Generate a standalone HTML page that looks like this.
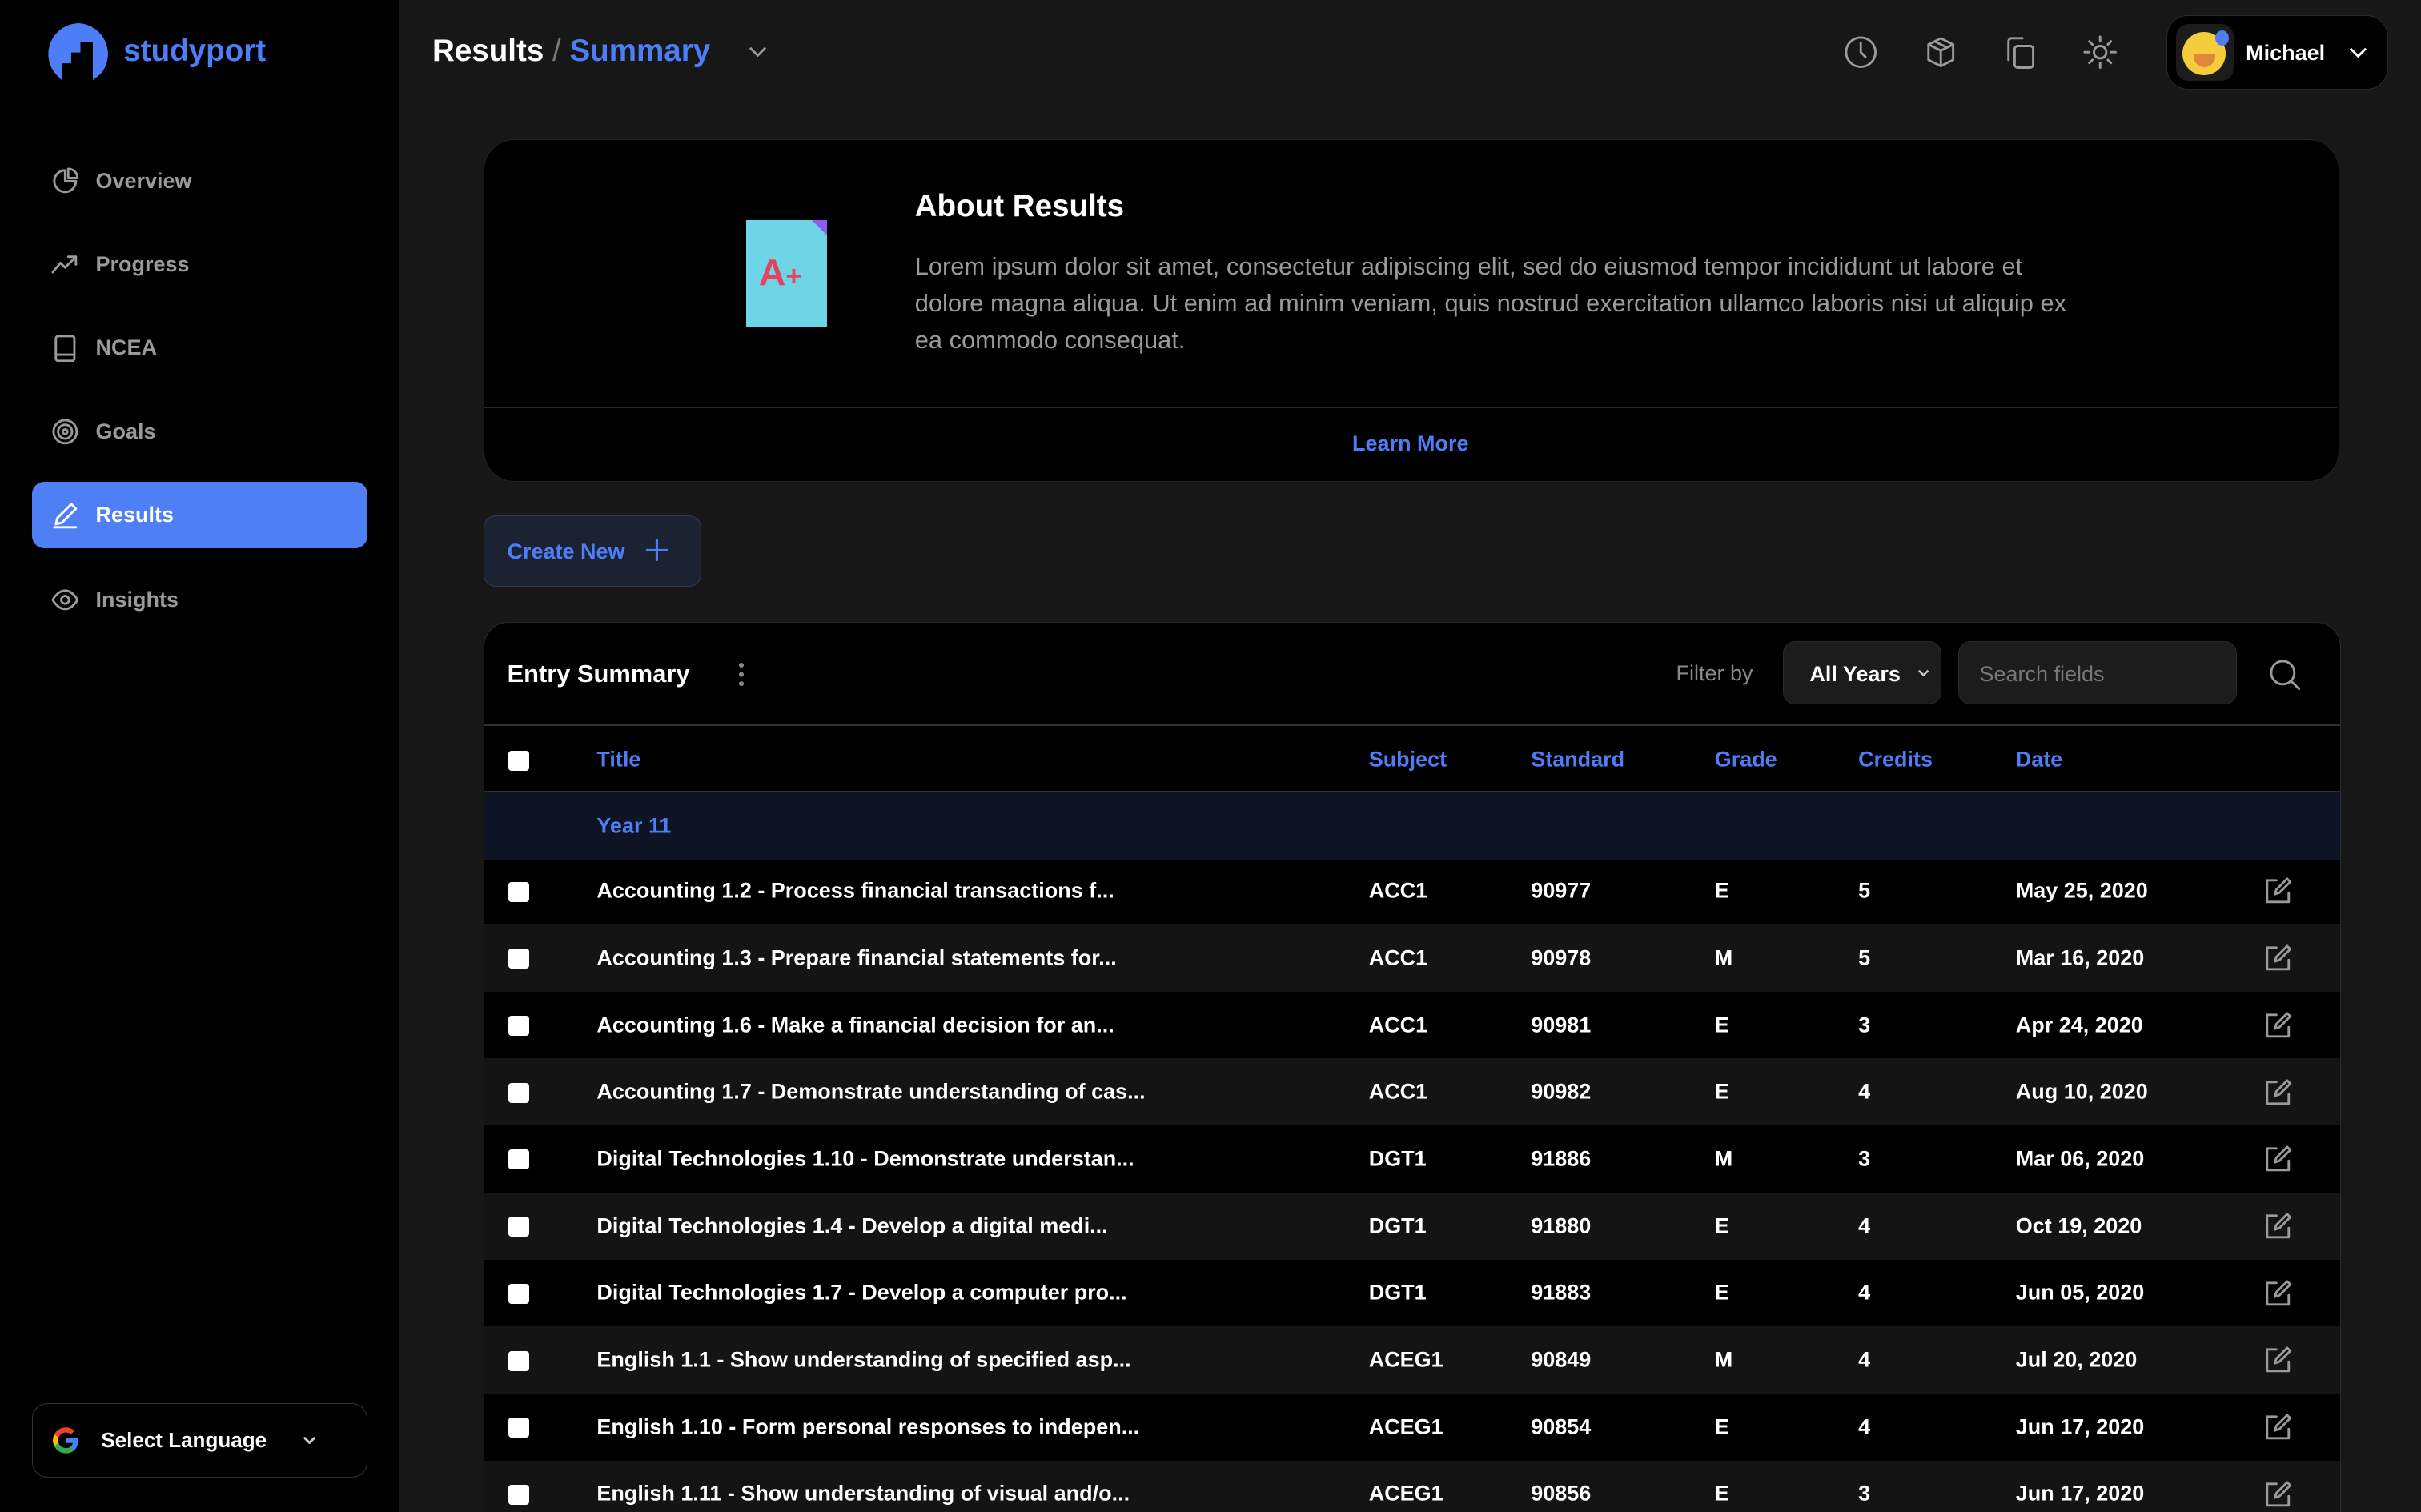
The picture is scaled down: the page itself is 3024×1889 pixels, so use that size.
<!DOCTYPE html>
<html><head><meta charset="utf-8"><style>
*{box-sizing:border-box;margin:0;padding:0}
html,body{width:3024px;height:1889px;overflow:hidden;background:#171717}
#r{zoom:1.92857;width:1568px;height:980px;position:relative;font-family:"Liberation Sans",sans-serif;color:#fff;background:#171717}
.a{position:absolute}
.sb{left:0;top:0;width:259px;height:980px;background:#000}
.nav{position:absolute;left:21px;width:217px;height:43px;display:flex;align-items:center;padding-left:12px;color:#9a9a9a;font-size:14px;font-weight:bold;border-radius:8px}
.nav svg{margin-right:11px}
.nav.on{background:#4f7ff5;color:#fff}
.ic{stroke:#9a9a9a;fill:none;stroke-width:1.5;stroke-linecap:round;stroke-linejoin:round}
.tb{left:313px;top:403px;width:1203px;height:600px;background:#000;border:1px solid #2a2a2a;border-radius:16px 16px 0 0;overflow:hidden}
.row{position:absolute;left:0;width:1203px;height:43.4px;font-size:14px;font-weight:bold}
.row span{position:absolute;top:50%;transform:translateY(-50%);white-space:nowrap}
.row.g{background:#141414}
.cb{position:absolute;left:16px;top:50%;margin-top:-6px;width:13px;height:13px;background:#fff;border-radius:2px}
.ed{position:absolute;left:1152px;top:12px}
</style></head><body><div id="r">
<div class="a sb">
 <svg class="a" style="left:31px;top:15px" width="40" height="40" viewBox="0 0 40 40"><path d="M20 0a20 20 0 0 0-15 33l4 4V26h6v-7h6v-7h8v25l5-4A20 20 0 0 0 20 0z" fill="#4d7ef7"/></svg>
 <div class="a" style="left:80px;top:22px;font-size:20px;font-weight:bold;color:#4d7ef7">studyport</div>
 <div class="nav" style="top:96px"><svg width="18" height="18" viewBox="0 0 18 18" class="ic"><path d="M9 2a7 7 0 1 0 7 7H9z"/><path d="M11 1v6h6a6 6 0 0 0-6-6z"/></svg>Overview</div>
 <div class="nav" style="top:150px"><svg width="18" height="18" viewBox="0 0 18 18" class="ic"><path d="M1 14l5-6 3 3 7-7M11 4h5v5"/></svg>Progress</div>
 <div class="nav" style="top:204px"><svg width="18" height="18" viewBox="0 0 18 18" class="ic"><rect x="3" y="1" width="12" height="16" rx="1.5"/><path d="M3 13h12"/></svg>NCEA</div>
 <div class="nav" style="top:258px"><svg width="18" height="18" viewBox="0 0 18 18" class="ic"><circle cx="9" cy="9" r="7.5"/><circle cx="9" cy="9" r="4.5"/><circle cx="9" cy="9" r="1.5"/></svg>Goals</div>
 <div class="nav on" style="top:312px"><svg width="18" height="18" viewBox="0 0 18 18" class="ic" style="stroke:#fff"><path d="M3 15l1-4 9-9 3 3-9 9zM2 17h14"/></svg>Results</div>
 <div class="nav" style="top:367px"><svg width="18" height="18" viewBox="0 0 18 18" class="ic"><path d="M1 9s3-6 8-6 8 6 8 6-3 6-8 6-8-6-8-6z"/><circle cx="9" cy="9" r="2.5"/></svg>Insights</div>
 <div class="a" style="left:21px;top:909px;width:217px;height:48px;border:1px solid #333;border-radius:10px;display:flex;align-items:center;padding-left:11px;font-size:13.5px;font-weight:bold">
  <svg width="20" height="20" viewBox="0 0 20 20" style="margin-right:13px"><path d="M18 10.2c0-.6 0-1.2-.2-1.7H10v3.3h4.5a4 4 0 0 1-1.7 2.5v2h2.8c1.6-1.5 2.4-3.7 2.4-6.1z" fill="#4285f4"/><path d="M10 18.5c2.3 0 4.2-.8 5.6-2.1l-2.8-2.1c-.7.5-1.7.8-2.8.8-2.200 0-4-1.5-4.7-3.4H2.5v2.2A8.5 8.5 0 0 0 10 18.5z" fill="#34a853"/><path d="M5.3 11.7a5 5 0 0 1 0-3.3V6.2H2.5a8.5 8.5 0 0 0 0 7.6z" fill="#fbbc05"/><path d="M10 4.9c1.2 0 2.3.4 3.2 1.3l2.4-2.4A8.5 8.5 0 0 0 2.5 6.2l2.8 2.2C6 6.4 7.8 4.9 10 4.9z" fill="#ea4335"/></svg>Select Language
  <svg width="12" height="12" viewBox="0 0 12 12" class="ic" style="margin-left:22px;stroke:#ccc"><path d="M3 4.5l3 3 3-3"/></svg></div>
</div>
<div class="a" style="left:280px;top:22px;font-size:20px;font-weight:bold">Results <span style="color:#777;font-weight:normal">/</span> <span style="color:#4d7ef7">Summary</span></div>
<svg class="a" style="left:484px;top:27px" width="14" height="14" viewBox="0 0 14 14"><path d="M2 4l5 5 5-5" stroke="#999" stroke-width="1.5" fill="none"/></svg>
<svg class="a ic" style="left:1194px;top:23px" width="22" height="22" viewBox="0 0 22 22"><circle cx="11" cy="11" r="9.5"/><path d="M11 5v6l3 3"/></svg>
<svg class="a ic" style="left:1246px;top:23px" width="22" height="22" viewBox="0 0 22 22"><path d="M11 2l8 4v10l-8 4-8-4V6zM3 6l8 4 8-4M11 10v10M7 4l8 4"/></svg>
<svg class="a ic" style="left:1297px;top:23px" width="22" height="22" viewBox="0 0 22 22"><path d="M4 16V4a2 2 0 0 1 2-2h7"/><rect x="8" y="7" width="12" height="14" rx="2"/></svg>
<svg class="a ic" style="left:1349px;top:23px" width="22" height="22" viewBox="0 0 22 22"><circle cx="11" cy="11" r="4"/><path d="M11 1v3M11 18v3M1 11h3M18 11h3M4 4l2 2M16 16l2 2M4 18l2-2M16 6l2-2"/></svg>
<div class="a" style="left:1403px;top:10px;width:144px;height:48px;background:#000;border:1px solid #2a2a2a;border-radius:14px">
 <div class="a" style="left:6px;top:5px;width:37px;height:37px;background:#1c1c1c;border-radius:8px"><div class="a" style="left:4px;top:5px;width:28px;height:28px;border-radius:50%;background:#f5cd3c"></div><div class="a" style="left:11px;top:20px;width:14px;height:8px;border-radius:0 0 7px 7px;background:#e0883a"></div><div class="a" style="left:25px;top:4px;width:9px;height:10px;border-radius:50%;background:#4d7ef7"></div></div>
 <div class="a" style="left:51px;top:16px;font-size:14px;font-weight:bold">Michael</div>
 <svg class="a" style="left:117px;top:17px" width="14" height="14" viewBox="0 0 14 14"><path d="M2 4l5 5 5-5" stroke="#fff" stroke-width="1.5" fill="none"/></svg>
</div>
<div class="a" style="left:313px;top:90px;width:1202px;height:222px;background:#000;border:1px solid #222;border-radius:20px">
 <div class="a" style="left:170px;top:52px;width:52px;height:69px;background:#6dd5e5"><div class="a" style="right:0;top:0;border-style:solid;border-width:0 10px 10px 0;border-color:transparent #8b5cf6 transparent transparent"></div><div class="a" style="left:8px;top:20px;font-size:24px;font-weight:bold;color:#e8415f">A<span style="font-size:18px">+</span></div></div>
 <div class="a" style="left:279px;top:32px;font-size:20px;font-weight:bold">About Results</div>
 <div class="a" style="left:279px;top:70px;width:755px;font-size:16px;line-height:24px;color:#9a9a9a">Lorem ipsum dolor sit amet, consectetur adipiscing elit, sed do eiusmod tempor incididunt ut labore et dolore magna aliqua. Ut enim ad minim veniam, quis nostrud exercitation ullamco laboris nisi ut aliquip ex ea commodo consequat.</div>
 <div class="a" style="left:0;top:173px;width:1200px;height:1px;background:#2a2a2a"></div>
 <div class="a" style="left:0;top:189px;width:1200px;text-align:center;font-size:14px;font-weight:bold;color:#4d7ef7">Learn More</div>
</div>
<div class="a" style="left:313px;top:334px;width:141px;height:46px;background:#1b2232;border:1px solid #2c3a58;border-radius:8px;font-size:14px;font-weight:bold;color:#4d7ef7;padding:15px 0 0 15px">Create New<svg class="a" style="left:104px;top:14px" width="16" height="16" viewBox="0 0 16 16"><path d="M8 1v14M1 8h14" stroke="#4d7ef7" stroke-width="1.6"/></svg></div>
<div class="a tb">
 <div class="a" style="left:15px;top:24px;font-size:16px;font-weight:bold">Entry Summary</div>
 <div class="a" style="left:165px;top:26px;width:3px;height:3px;border-radius:50%;background:#888;box-shadow:0 6px 0 #888,0 12px 0 #888"></div>
 <div class="a" style="left:772px;top:25px;font-size:14px;color:#8a8a8a">Filter by</div>
 <div class="a" style="left:841px;top:12px;width:103px;height:41px;background:#1c1c1c;border:1px solid #2a2a2a;border-radius:8px;font-size:14px;font-weight:bold;padding:13px 0 0 17px">All Years<svg class="a" style="left:86px;top:15px" width="10" height="10" viewBox="0 0 10 10"><path d="M2 3.5l3 3 3-3" stroke="#ccc" stroke-width="1.3" fill="none"/></svg></div>
 <div class="a" style="left:955px;top:12px;width:180px;height:41px;background:#1c1c1c;border:1px solid #2a2a2a;border-radius:8px;font-size:14px;color:#777;padding:13px 0 0 13px">Search fields</div>
 <svg class="a ic" style="left:1156px;top:23px" width="21" height="21" viewBox="0 0 21 21"><circle cx="9" cy="9" r="7.5"/><path d="M14.5 14.5l5 5"/></svg>
 <div class="a" style="left:0;top:66px;width:1203px;height:1px;background:#2f2f2f"></div>
 <div class="row" style="top:67px;color:#4d7ef7"><div class="cb"></div><span style="left:73px">Title</span><span style="left:573px">Subject</span><span style="left:678px">Standard</span><span style="left:797px">Grade</span><span style="left:890px">Credits</span><span style="left:992px">Date</span></div>
 <div class="a" style="left:0;top:109px;width:1203px;height:1px;background:#2f2f2f"></div>
 <div class="row" style="top:110px;background:#0f1424;color:#4d7ef7"><span style="left:73px">Year 11</span></div>

 <div class="row" style="top:152px"><div class="cb"></div><span style="left:73px">Accounting 1.2 - Process financial transactions f...</span><span style="left:573px">ACC1</span><span style="left:678px">90977</span><span style="left:797px">E</span><span style="left:890px">5</span><span style="left:992px">May 25, 2020</span><svg class="ed ic" width="20" height="20" viewBox="0 0 20 20"><path d="M9 3H3v14h14v-6M8 12l1-3 7-7 2 2-7 7z"/></svg></div>
 <div class="row g" style="top:195.4px"><div class="cb"></div><span style="left:73px">Accounting 1.3 - Prepare financial statements for...</span><span style="left:573px">ACC1</span><span style="left:678px">90978</span><span style="left:797px">M</span><span style="left:890px">5</span><span style="left:992px">Mar 16, 2020</span><svg class="ed ic" width="20" height="20" viewBox="0 0 20 20"><path d="M9 3H3v14h14v-6M8 12l1-3 7-7 2 2-7 7z"/></svg></div>
 <div class="row" style="top:238.8px"><div class="cb"></div><span style="left:73px">Accounting 1.6 - Make a financial decision for an...</span><span style="left:573px">ACC1</span><span style="left:678px">90981</span><span style="left:797px">E</span><span style="left:890px">3</span><span style="left:992px">Apr 24, 2020</span><svg class="ed ic" width="20" height="20" viewBox="0 0 20 20"><path d="M9 3H3v14h14v-6M8 12l1-3 7-7 2 2-7 7z"/></svg></div>
 <div class="row g" style="top:282.2px"><div class="cb"></div><span style="left:73px">Accounting 1.7 - Demonstrate understanding of cas...</span><span style="left:573px">ACC1</span><span style="left:678px">90982</span><span style="left:797px">E</span><span style="left:890px">4</span><span style="left:992px">Aug 10, 2020</span><svg class="ed ic" width="20" height="20" viewBox="0 0 20 20"><path d="M9 3H3v14h14v-6M8 12l1-3 7-7 2 2-7 7z"/></svg></div>
 <div class="row" style="top:325.6px"><div class="cb"></div><span style="left:73px">Digital Technologies 1.10 - Demonstrate understan...</span><span style="left:573px">DGT1</span><span style="left:678px">91886</span><span style="left:797px">M</span><span style="left:890px">3</span><span style="left:992px">Mar 06, 2020</span><svg class="ed ic" width="20" height="20" viewBox="0 0 20 20"><path d="M9 3H3v14h14v-6M8 12l1-3 7-7 2 2-7 7z"/></svg></div>
 <div class="row g" style="top:369px"><div class="cb"></div><span style="left:73px">Digital Technologies 1.4 - Develop a digital medi...</span><span style="left:573px">DGT1</span><span style="left:678px">91880</span><span style="left:797px">E</span><span style="left:890px">4</span><span style="left:992px">Oct 19, 2020</span><svg class="ed ic" width="20" height="20" viewBox="0 0 20 20"><path d="M9 3H3v14h14v-6M8 12l1-3 7-7 2 2-7 7z"/></svg></div>
 <div class="row" style="top:412.4px"><div class="cb"></div><span style="left:73px">Digital Technologies 1.7 - Develop a computer pro...</span><span style="left:573px">DGT1</span><span style="left:678px">91883</span><span style="left:797px">E</span><span style="left:890px">4</span><span style="left:992px">Jun 05, 2020</span><svg class="ed ic" width="20" height="20" viewBox="0 0 20 20"><path d="M9 3H3v14h14v-6M8 12l1-3 7-7 2 2-7 7z"/></svg></div>
 <div class="row g" style="top:455.8px"><div class="cb"></div><span style="left:73px">English 1.1 - Show understanding of specified asp...</span><span style="left:573px">ACEG1</span><span style="left:678px">90849</span><span style="left:797px">M</span><span style="left:890px">4</span><span style="left:992px">Jul 20, 2020</span><svg class="ed ic" width="20" height="20" viewBox="0 0 20 20"><path d="M9 3H3v14h14v-6M8 12l1-3 7-7 2 2-7 7z"/></svg></div>
 <div class="row" style="top:499.2px"><div class="cb"></div><span style="left:73px">English 1.10 - Form personal responses to indepen...</span><span style="left:573px">ACEG1</span><span style="left:678px">90854</span><span style="left:797px">E</span><span style="left:890px">4</span><span style="left:992px">Jun 17, 2020</span><svg class="ed ic" width="20" height="20" viewBox="0 0 20 20"><path d="M9 3H3v14h14v-6M8 12l1-3 7-7 2 2-7 7z"/></svg></div>
 <div class="row g" style="top:542.6px"><div class="cb"></div><span style="left:73px">English 1.11 - Show understanding of visual and/o...</span><span style="left:573px">ACEG1</span><span style="left:678px">90856</span><span style="left:797px">E</span><span style="left:890px">3</span><span style="left:992px">Jun 17, 2020</span><svg class="ed ic" width="20" height="20" viewBox="0 0 20 20"><path d="M9 3H3v14h14v-6M8 12l1-3 7-7 2 2-7 7z"/></svg></div>
</div>
</div>
</body></html>
